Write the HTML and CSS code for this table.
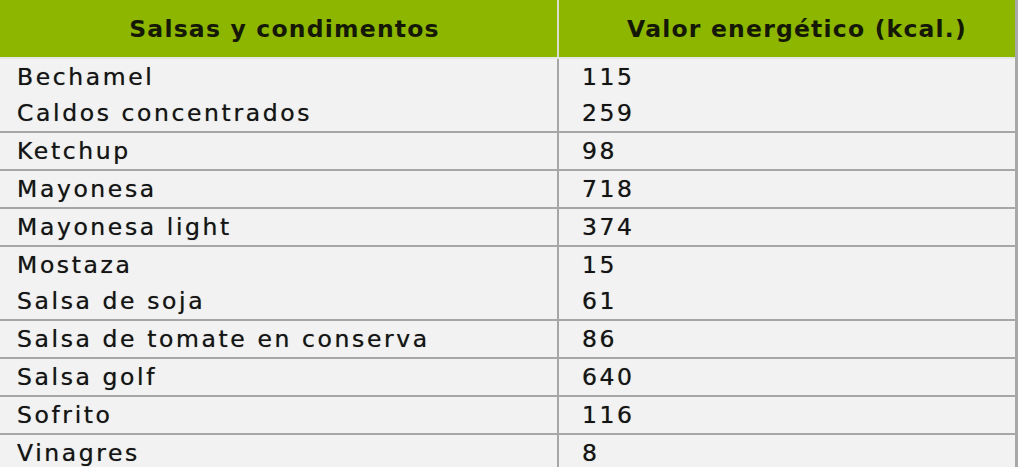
FILE: index.html
```html
<!DOCTYPE html>
<html lang="es">
<head>
<meta charset="utf-8">
<title>Salsas y condimentos</title>
<link rel="stylesheet" href="styles.css">
</head>
<body>
<table class="kcal">
  <thead>
    <tr>
      <th class="c1">Salsas y condimentos</th>
      <th class="c2">Valor energético (kcal.)</th>
    </tr>
  </thead>
  <tbody>
    <tr><td class="c1">Bechamel<br>Caldos concentrados</td><td class="c2">115<br>259</td></tr>
    <tr><td class="c1">Ketchup</td><td class="c2">98</td></tr>
    <tr><td class="c1">Mayonesa</td><td class="c2">718</td></tr>
    <tr><td class="c1">Mayonesa light</td><td class="c2">374</td></tr>
    <tr><td class="c1">Mostaza<br>Salsa de soja</td><td class="c2">15<br>61</td></tr>
    <tr><td class="c1">Salsa de tomate en conserva</td><td class="c2">86</td></tr>
    <tr><td class="c1">Salsa golf</td><td class="c2">640</td></tr>
    <tr><td class="c1">Sofrito</td><td class="c2">116</td></tr>
    <tr><td class="c1">Vinagres</td><td class="c2">8</td></tr>
  </tbody>
</table>
</body>
</html>
```
FILE: styles.css
```css
html, body {
  margin: 0;
  padding: 0;
  background: #ffffff;
}
body {
  font-family: "DejaVu Sans", Verdana, sans-serif;
  color: #141414;
  overflow: hidden;
}
.kcal {
  border-collapse: collapse;
  table-layout: fixed;
  width: 1022px;
  margin-left: -4px;
  background: #f2f2f2;
  font-size: 23.5px;
}
.kcal th {
  background: #8cb600;
  height: 57px;
  padding: 0;
  font-weight: bold;
  letter-spacing: 1.2px;
  text-align: center;
  color: #141805;
  border-bottom: 2px solid #e6e6e6;
}
.kcal th.c1 {
  width: 545px;
  border-right: 2px solid #d9dccf;
  padding-left: 16px;
}
.kcal th.c2 {
  padding-left: 20px;
  border-right: 3px solid #a8a8a8;
}
.kcal td {
  padding: 0;
  line-height: 36px;
  letter-spacing: 2.6px;
  vertical-align: top;
  border-bottom: 2px solid #a6a6a6;
  text-align: left;
  white-space: nowrap;
  text-shadow: 0 0 0.7px rgba(0, 0, 0, 0.55);
}
.kcal td.c1 {
  padding-left: 21px;
  border-right: 2px solid #a6a6a6;
}
.kcal td.c2 {
  padding-left: 23px;
  border-right: 3px solid #a8a8a8;
}
```
